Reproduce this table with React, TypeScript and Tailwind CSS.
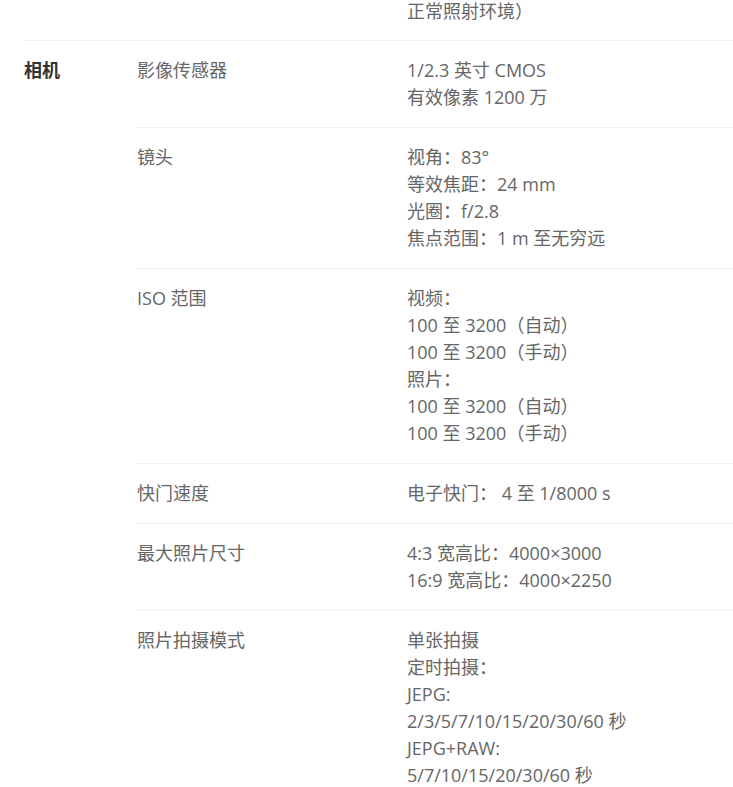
const specs: { label: string; lines: string[] }[] = [
  { label: "影像传感器", lines: ["1/2.3 英寸 CMOS", "有效像素 1200 万"] },
  {
    label: "镜头",
    lines: ["视角：83°", "等效焦距：24 mm", "光圈：f/2.8", "焦点范围：1 m 至无穷远"],
  },
  {
    label: "ISO 范围",
    lines: [
      "视频：",
      "100 至 3200（自动）",
      "100 至 3200（手动）",
      "照片：",
      "100 至 3200（自动）",
      "100 至 3200（手动）",
    ],
  },
  { label: "快门速度", lines: ["电子快门： 4 至 1/8000 s"] },
  { label: "最大照片尺寸", lines: ["4:3 宽高比：4000×3000", "16:9 宽高比：4000×2250"] },
  {
    label: "照片拍摄模式",
    lines: [
      "单张拍摄",
      "定时拍摄：",
      "JEPG:",
      "2/3/5/7/10/15/20/30/60 秒",
      "JEPG+RAW:",
      "5/7/10/15/20/30/60 秒",
    ],
  },
];

export default function App() {
  return (
    <div
      className="h-screen overflow-hidden bg-white pl-6 text-[18px] leading-[27px] text-[#666]"
      style={{ fontFamily: '"Open Sans", "Noto Sans CJK SC", sans-serif' }}
    >
      {/* tail of the previous group */}
      <div className="-mt-[2px] flex pb-[15px]">
        <div className="w-[383px] shrink-0" />
        <p>正常照射环境）</p>
      </div>

      {/* camera group */}
      <div className="flex border-t border-[#f0f0f0]">
        <h3 className="w-[113px] shrink-0 pt-4 font-bold text-[#333]">相机</h3>
        <div className="flex-1">
          {specs.map((s, i) => (
            <div
              key={s.label}
              className={`flex py-4 ${i > 0 ? "border-t border-[#f0f0f0]" : ""}`}
            >
              <p className="w-[270px] shrink-0">{s.label}</p>
              <div>
                {s.lines.map((l, j) => (
                  <p key={j}>{l}</p>
                ))}
              </div>
            </div>
          ))}
        </div>
      </div>
    </div>
  );
}
